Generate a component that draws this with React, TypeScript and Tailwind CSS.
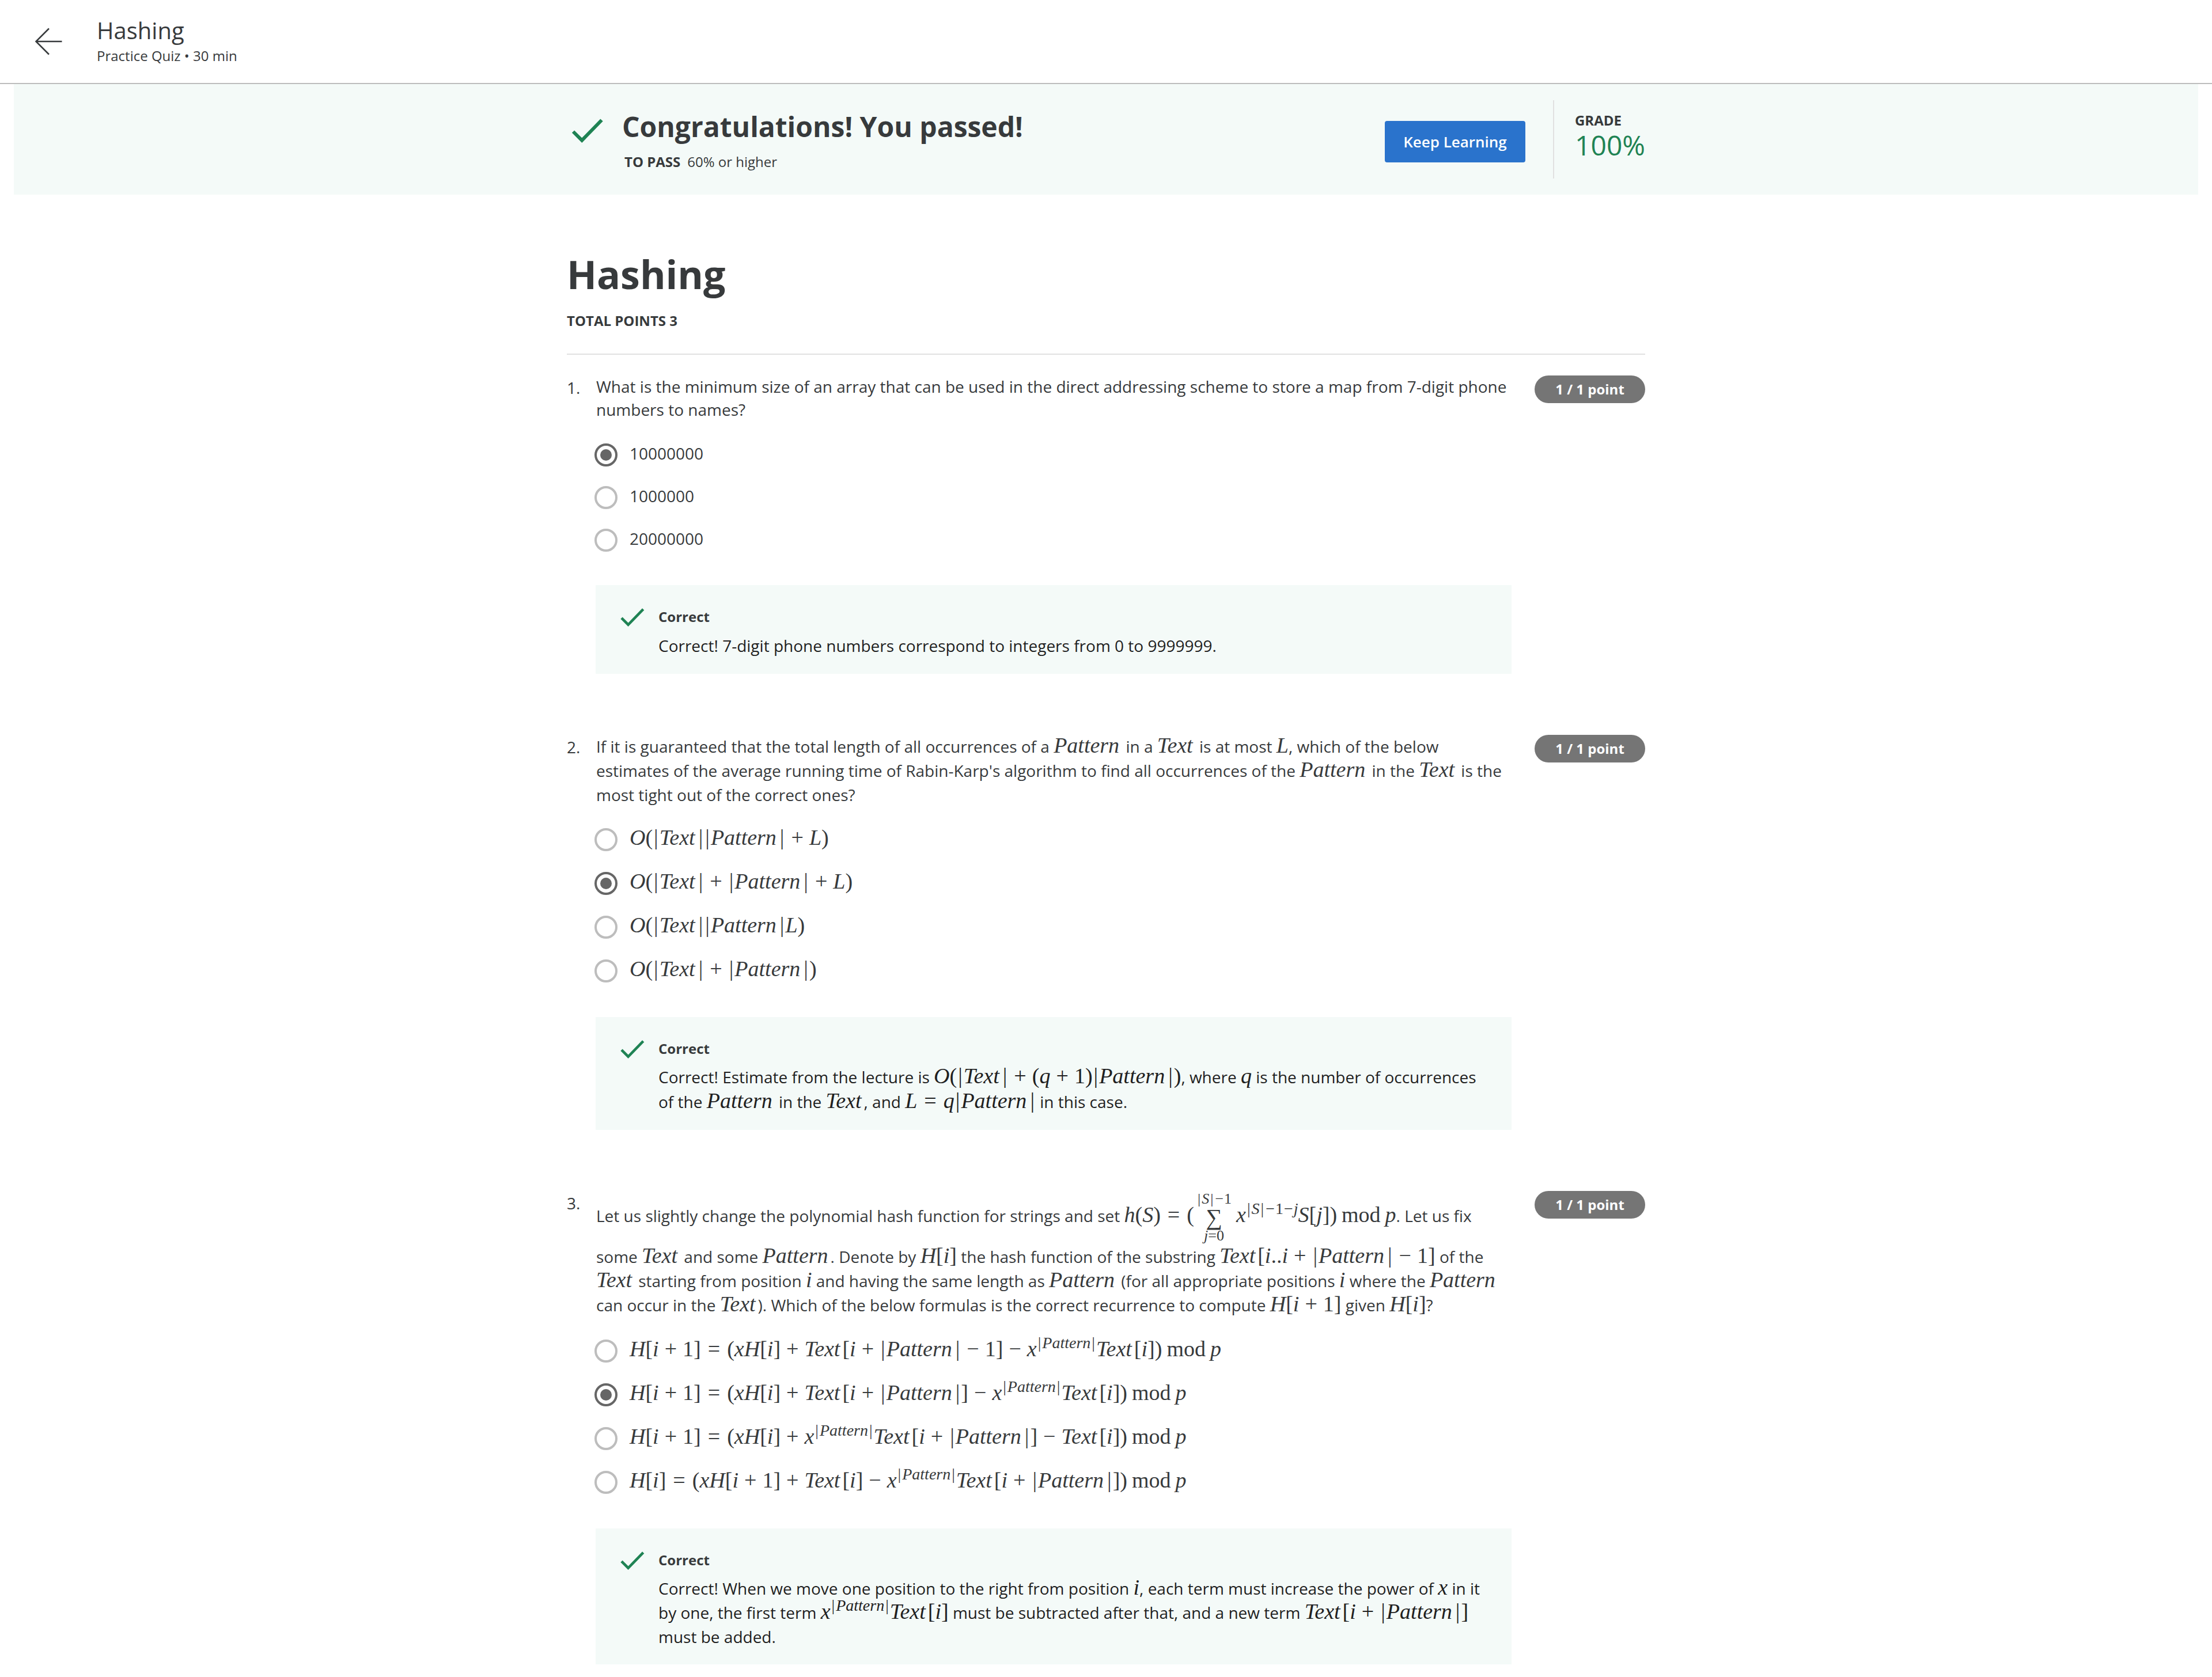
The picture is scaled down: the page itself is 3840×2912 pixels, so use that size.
import React from "react";

/* ---------- math notation ---------- */

const TOKEN = /\^\{[^}]*\}|\bmod\b|[A-Za-z]+|[0-9.]+|[|]|[()\[\]]|[+−]|=/g;

function tokens(src: string, small: boolean): React.ReactNode[] {
  const found = src.match(TOKEN) ?? [];
  return found.map((t, i) => {
    if (t.startsWith("^")) {
      return (
        <sup key={i} className="text-[28px] leading-[0]">
          {tokens(t.slice(2, -1), true)}
        </sup>
      );
    }
    if (t === "mod") return <span key={i} className="mx-2">mod</span>;
    if (t === "|") return <span key={i} className={small ? "px-0.5" : "px-0.5"}>|</span>;
    if (t === "+" || t === "−")
      return <span key={i} className={small ? "mx-px" : "mx-2.5"}>{t}</span>;
    if (t === "=") return <span key={i} className={small ? "" : "mx-3"}>=</span>;
    if (/^[A-Za-z]+$/.test(t))
      return <i key={i} className={t.length > 2 && !small ? "mr-1" : ""}>{t}</i>;
    return <span key={i}>{t}</span>;
  });
}

function M({ children }: { children: string }) {
  return (
    <span className="whitespace-nowrap font-['Liberation_Serif',serif] text-[38px] leading-[0]">
      {tokens(children, false)}
    </span>
  );
}

function Sum() {
  return (
    <span className="mr-2 ml-1 inline-flex h-[94px] flex-col items-center justify-center align-middle font-['Liberation_Serif',serif] text-[26px]">
      <span className="leading-[28px]">{tokens("|S|−1", true)}</span>
      <span className="text-[40px] leading-[36px]">∑</span>
      <span className="leading-[28px]">{tokens("j=0", true)}</span>
    </span>
  );
}

/* ---------- icons ---------- */

function Check({ className }: { className: string }) {
  return (
    <svg viewBox="0 0 56 42" className={className} fill="none" aria-hidden="true">
      <path d="M3 22.5 L18.2 37.7 L52.5 2.5" stroke="#1f8354" strokeWidth="6" />
    </svg>
  );
}

function BackArrow() {
  return (
    <svg viewBox="0 0 48 48" className="size-12" fill="none" stroke="#373a3c" strokeWidth="2.5" aria-hidden="true">
      <path d="M2 24 H47.5 M25 1.5 L2.5 24 L25 46.5" />
    </svg>
  );
}

/* ---------- questions ---------- */

type Item = {
  prompt: React.ReactNode;
  promptClass: string;
  optionsClass: string;
  optionClass: string;
  options: React.ReactNode[];
  chosen: number;
  feedback: React.ReactNode;
  feedbackClass: string;
};

const items: Item[] = [
  {
    prompt:
      "What is the minimum size of an array that can be used in the direct addressing scheme to store a map from 7-digit phone numbers to names?",
    promptClass: "leading-[40px]",
    optionsClass: "mt-[39px]",
    optionClass: "h-10 leading-[34px]",
    options: ["10000000", "1000000", "20000000"],
    chosen: 0,
    feedback: "Correct! 7-digit phone numbers correspond to integers from 0 to 9999999.",
    feedbackClass: "leading-[44px]",
  },
  {
    prompt: (
      <>
        If it is guaranteed that the total length of all occurrences of a <M>Pattern</M> in a <M>Text</M> is at most{" "}
        <M>L</M>, which of the below estimates of the average running time of Rabin-Karp's algorithm to find all
        occurrences of the <M>Pattern</M> in the <M>Text</M> is the most tight out of the correct ones?
      </>
    ),
    promptClass: "leading-[42px]",
    optionsClass: "mt-[37px]",
    optionClass: "h-[42px] leading-[36px]",
    options: [
      <M>O(|Text||Pattern|+L)</M>,
      <M>O(|Text|+|Pattern|+L)</M>,
      <M>O(|Text||Pattern|L)</M>,
      <M>O(|Text|+|Pattern|)</M>,
    ],
    chosen: 1,
    feedback: (
      <>
        Correct! Estimate from the lecture is <M>O(|Text|+(q+1)|Pattern|)</M>, where <M>q</M> is the number of
        occurrences of the <M>Pattern</M> in the <M>Text</M>, and <M>L=q|Pattern|</M> in this case.
      </>
    ),
    feedbackClass: "leading-[43px]",
  },
  {
    prompt: (
      <>
        Let us slightly change the polynomial hash function for strings and set{" "}
        <span className="whitespace-nowrap">
          <M>h(S)=(</M>
          <Sum />
          <M>{"x^{|S|−1−j}S[j]) mod p"}</M>
        </span>
        . Let us fix some <M>Text</M> and some <M>Pattern</M>. Denote by <M>H[i]</M> the hash function of the substring{" "}
        <M>Text[i..i+|Pattern|−1]</M> of the <M>Text</M> starting from position <M>i</M> and having the same length as{" "}
        <M>Pattern</M> (for all appropriate positions <M>i</M> where the <M>Pattern</M> can occur in the <M>Text</M>).
        Which of the below formulas is the correct recurrence to compute <M>H[i+1]</M> given <M>H[i]</M>?
      </>
    ),
    promptClass: "leading-[42px]",
    optionsClass: "mt-[39px]",
    optionClass: "h-[42px] leading-[36px]",
    options: [
      <M>{"H[i+1]=(xH[i]+Text[i+|Pattern|−1]−x^{|Pattern|}Text[i]) mod p"}</M>,
      <M>{"H[i+1]=(xH[i]+Text[i+|Pattern|]−x^{|Pattern|}Text[i]) mod p"}</M>,
      <M>{"H[i+1]=(xH[i]+x^{|Pattern|}Text[i+|Pattern|]−Text[i]) mod p"}</M>,
      <M>{"H[i]=(xH[i+1]+Text[i]−x^{|Pattern|}Text[i+|Pattern|]) mod p"}</M>,
    ],
    chosen: 1,
    feedback: (
      <>
        Correct! When we move one position to the right from position <M>i</M>, each term must increase the power of{" "}
        <M>x</M> in it by one, the first term <M>{"x^{|Pattern|}Text[i]"}</M> must be subtracted after that, and a new
        term <M>Text[i+|Pattern|]</M> must be added.
      </>
    ),
    feedbackClass: "leading-[42px]",
  },
];

function Question({ item, index }: { item: Item; index: number }) {
  return (
    <section className="flex items-start">
      <span className="w-[50px] shrink-0 text-[28px] leading-[42px]">{index + 1}.</span>

      <div className="-mt-px min-w-0 flex-1">
        <p id={`prompt-${index}`} className={`pl-px text-[28px] ${item.promptClass}`}>
          {item.prompt}
        </p>

        <div
          role="radiogroup"
          aria-labelledby={`prompt-${index}`}
          className={`-ml-0.5 flex flex-col gap-[34px] ${item.optionsClass}`}
        >
          {item.options.map((option, i) => (
            <label key={i} className={`flex items-start gap-[21px] text-[28px] ${item.optionClass}`}>
              <input
                type="radio"
                name={`question-${index}`}
                defaultChecked={i === item.chosen}
                className="size-10 shrink-0 appearance-none rounded-full border-4 border-[#bdbdbd] bg-clip-content p-1.5 checked:border-[#666666] checked:bg-[#666666]"
              />
              <span>{option}</span>
            </label>
          ))}
        </div>

        <div className="mt-[58px] flex items-start gap-[21px] bg-[#f4faf8] px-10 pt-10 pb-[27px]">
          <Check className="h-8 w-12 shrink-0" />
          <div className="min-w-0 flex-1">
            <h3 className="text-[24px] leading-[30px] font-bold">Correct</h3>
            <p className={`mt-[13px] text-[28px] text-[#1f1f1f] ${item.feedbackClass}`}>{item.feedback}</p>
          </div>
        </div>
      </div>

      <span className="ml-10 w-48 shrink-0 rounded-full bg-[#757575] text-center text-[24px] leading-[48px] font-bold text-white">
        1 / 1 point
      </span>
    </section>
  );
}

/* ---------- page ---------- */

export default function App() {
  return (
    <div className="min-h-screen bg-white font-['Open_Sans',sans-serif] text-[#373a3c]">
      <header className="flex h-[146px] items-start gap-[60px] border-b-2 border-[#bdbdbd] pl-[60px]">
        <button type="button" aria-label="Back" className="mt-12">
          <BackArrow />
        </button>
        <div className="pt-[26px]">
          <div className="text-[40px] leading-[54px]">Hashing</div>
          <div className="mt-px text-[24px] leading-[32px]">Practice Quiz • 30 min</div>
        </div>
      </header>

      <div className="mx-6 bg-[#f4faf8]">
        <div className="mx-auto flex w-full max-w-[1872px] items-start justify-between py-7">
          <div className="flex items-start gap-8 pt-[13px] pl-2">
            <Check className="mt-[19px] h-[42px] w-14 shrink-0" />
            <div>
              <h2 className="text-[48px] leading-[66px] font-bold">Congratulations! You passed!</h2>
              <p className="mt-3 pl-1 text-[24px] leading-[32px]">
                <span className="mr-3 font-bold">TO PASS</span>
                60% or higher
              </p>
            </div>
          </div>
          <div className="flex items-start">
            <button
              type="button"
              className="mt-9 h-[72px] w-[244px] rounded bg-[#2a73cc] text-[26px] leading-[36px] font-semibold text-white"
            >
              Keep Learning
            </button>
            <div className="ml-12 h-[136px] border-l-2 border-[#e1e1e1] pt-[19px] pl-9">
              <div className="text-[24px] leading-[32px] font-bold">GRADE</div>
              <div className="text-[48px] leading-[54px] text-[#1f8354]">100%</div>
            </div>
          </div>
        </div>
      </div>

      <main className="mx-auto w-full max-w-[1872px] pt-[98px]">
        <div className="border-b-2 border-[#e1e1e1] pb-[41px]">
          <h1 className="text-[68px] leading-[80px] font-bold">Hashing</h1>
          <div className="mt-[25px] text-[24px] leading-[32px] font-bold">TOTAL POINTS 3</div>
        </div>
        <div className="flex flex-col gap-[106px] pt-9">
          {items.map((item, i) => (
            <Question key={i} item={item} index={i} />
          ))}
        </div>
      </main>
    </div>
  );
}
